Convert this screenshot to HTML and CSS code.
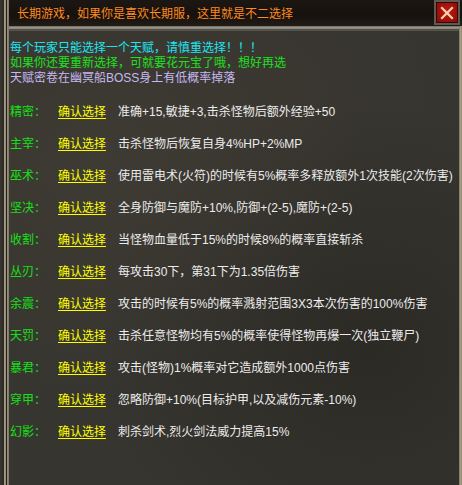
FILE: index.html
```html
<!DOCTYPE html>
<html lang="zh-CN">
<head>
<meta charset="utf-8">
<title>天赋选择</title>
<link rel="stylesheet" href="styles.css">
</head>
<body>
<div class="window">
  <div class="titlebar">
    <span class="title">长期游戏，如果你是喜欢长期服，这里就是不二选择</span>
    <button class="close" aria-label="关闭">
      <svg width="14" height="14" viewBox="0 0 14 14"><path d="M2 2 L12 12 M12 2 L2 12" stroke="#ffd0b0" stroke-width="2.2" stroke-linecap="square"/></svg>
    </button>
  </div>
  <div class="sep"></div>
  <div class="content">
    <div class="notes">
      <p class="cyan">每个玩家只能选择一个天赋，请慎重选择！！！</p>
      <p class="green">如果你还要重新选择，可就要花元宝了哦，想好再选</p>
      <p class="lavender">天赋密卷在幽冥船BOSS身上有低概率掉落</p>
    </div>
    <ul class="rows">
      <li><span class="label">精密：</span><a class="pick" href="#">确认选择</a><span class="desc">准确+15,敏捷+3,击杀怪物后额外经验+50</span></li>
      <li><span class="label">主宰：</span><a class="pick" href="#">确认选择</a><span class="desc">击杀怪物后恢复自身4%HP+2%MP</span></li>
      <li><span class="label">巫术：</span><a class="pick" href="#">确认选择</a><span class="desc">使用雷电术(火符)的时候有5%概率多释放额外1次技能(2次伤害)</span></li>
      <li><span class="label">坚决：</span><a class="pick" href="#">确认选择</a><span class="desc">全身防御与魔防+10%,防御+(2-5),魔防+(2-5)</span></li>
      <li><span class="label">收割：</span><a class="pick" href="#">确认选择</a><span class="desc">当怪物血量低于15%的时候8%的概率直接斩杀</span></li>
      <li><span class="label">丛刃：</span><a class="pick" href="#">确认选择</a><span class="desc">每攻击30下，第31下为1.35倍伤害</span></li>
      <li><span class="label">余震：</span><a class="pick" href="#">确认选择</a><span class="desc">攻击的时候有5%的概率溅射范围3X3本次伤害的100%伤害</span></li>
      <li><span class="label">天罚：</span><a class="pick" href="#">确认选择</a><span class="desc">击杀任意怪物均有5%的概率使得怪物再爆一次(独立鞭尸)</span></li>
      <li><span class="label">暴君：</span><a class="pick" href="#">确认选择</a><span class="desc">攻击(怪物)1%概率对它造成额外1000点伤害</span></li>
      <li><span class="label">穿甲：</span><a class="pick" href="#">确认选择</a><span class="desc">忽略防御+10%(目标护甲,以及减伤元素-10%)</span></li>
      <li><span class="label">幻影：</span><a class="pick" href="#">确认选择</a><span class="desc">刺杀剑术,烈火剑法威力提高15%</span></li>
    </ul>
  </div>
</div>
</body>
</html>
```
FILE: styles.css
```css
* { box-sizing: border-box; }
html, body { margin: 0; padding: 0; }
body {
  width: 462px;
  height: 485px;
  overflow: hidden;
  background: #302e2a;
  font-family: "Liberation Sans", "Noto Sans CJK SC", sans-serif;
  font-size: 12px;
}
.window {
  width: 462px;
  height: 485px;
  display: flex;
  flex-direction: column;
  padding: 0 3px 0 9px;
  background:
    linear-gradient(to right,
      #3a3630 0, #2c2925 4px,
      #a8a08a 4px, #8f8672 6px,
      #24211d 6px, #24211d 7px,
      #9c9480 7px, #7d7563 9px,
      transparent 9px),
    linear-gradient(to left,
      #8c8470 0, #b0a88f 2px, #5a554b 3px,
      transparent 3px),
    #302e2a;
}
.titlebar {
  height: 26px;
  display: flex;
  align-items: center;
  justify-content: space-between;
  padding: 0 2px 0 8px;
  margin-right: -3px;
  background: linear-gradient(#1c1713, #15110e 60%, #221c17);
}
.title {
  color: #ff8a1c;
  font-size: 12px;
  line-height: 16px;
  padding-top: 2px;
}
.close {
  width: 26px;
  height: 25px;
  margin: 0;
  padding: 0;
  border: 2px solid #5f5a52;
  background: radial-gradient(circle at 50% 45%, #c21a10, #8e0e08 80%);
  box-shadow: inset 0 0 0 1px #3a0604;
  display: flex;
  align-items: center;
  justify-content: center;
  align-self: flex-start;
}
.sep {
  height: 5px;
  background: linear-gradient(#7a766c 0, #7a766c 1px, #9a968a 1px, #8a867c 3px, #4c4a44 3px, #5a5750 5px);
}
.content {
  flex: 1;
  padding: 10px 0 0 1px;
  background:
    radial-gradient(ellipse at 20% 30%, rgba(70,66,58,0.45), transparent 50%),
    radial-gradient(ellipse at 80% 70%, rgba(24,22,20,0.35), transparent 55%),
    radial-gradient(ellipse at 60% 20%, rgba(60,56,50,0.4), transparent 45%),
    #37352f;
}
.notes p {
  margin: 0;
  line-height: 15px;
  white-space: nowrap;
}
.cyan { color: #1ee6f0; }
.green { color: #1fe01f; }
.lavender { color: #c6b8f0; }
.rows {
  list-style: none;
  margin: 8px 0 0;
  padding: 0;
}
.rows li {
  height: 32px;
  display: flex;
  align-items: center;
  white-space: nowrap;
}
.label {
  width: 48px;
  color: #16e016;
}
.pick {
  width: 48px;
  color: #ffff00;
  text-decoration: underline;
  text-underline-offset: 2px;
  margin-right: 12px;
}
.desc {
  color: #ececec;
}
```
